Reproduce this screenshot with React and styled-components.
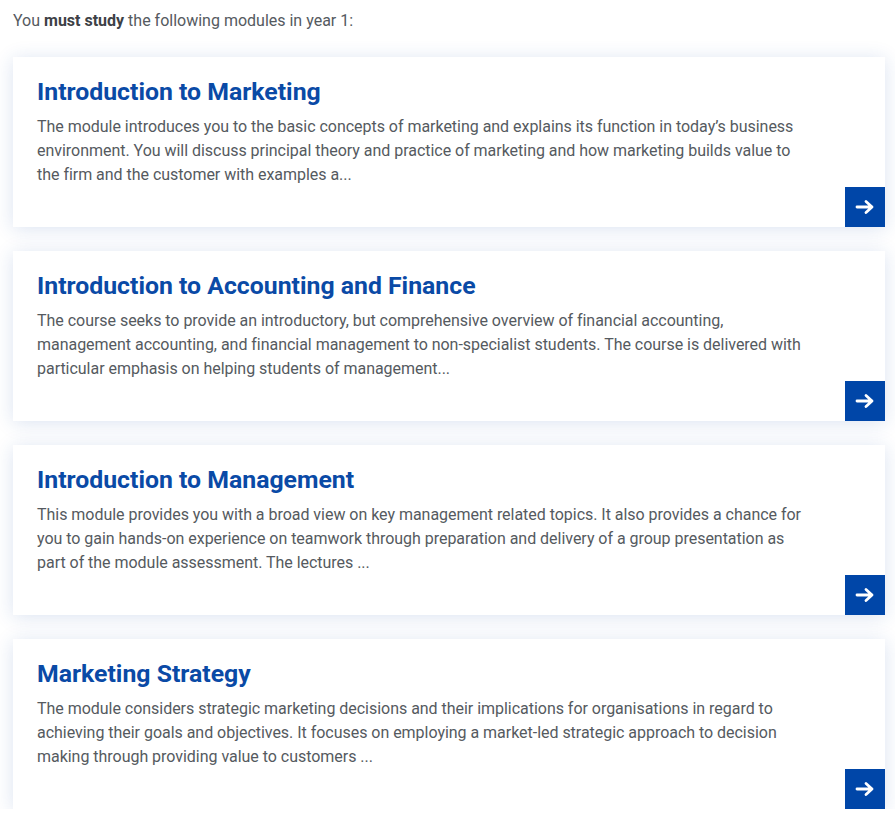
import styled, { createGlobalStyle } from "styled-components"

const GlobalStyle = createGlobalStyle`
  body {
    margin: 0;
    background: #ffffff;
    font-family: Roboto, "Liberation Sans", sans-serif;
  }
`

const modules = [
  {
    title: "Introduction to Marketing",
    text: "The module introduces you to the basic concepts of marketing and explains its function in today’s business environment. You will discuss principal theory and practice of marketing and how marketing builds value to the firm and the customer with examples a...",
  },
  {
    title: "Introduction to Accounting and Finance",
    text: "The course seeks to provide an introductory, but comprehensive overview of financial accounting, management accounting, and financial management to non-specialist students. The course is delivered with particular emphasis on helping students of management...",
  },
  {
    title: "Introduction to Management",
    text: "This module provides you with a broad view on key management related topics. It also provides a chance for you to gain hands-on experience on teamwork through preparation and delivery of a group presentation as part of the module assessment. The lectures ...",
  },
  {
    title: "Marketing Strategy",
    text: "The module considers strategic marketing decisions and their implications for organisations in regard to achieving their goals and objectives. It focuses on employing a market-led strategic approach to decision making through providing value to customers ...",
  },
]

const ArrowIcon = () => (
  <svg width="20" height="16" viewBox="0 0 20 16" fill="none">
    <path d="M2 8h15M11 2.5L17 8l-6 5.5" stroke="#fff" strokeWidth="2.8" strokeLinecap="round" strokeLinejoin="round" />
  </svg>
)

export default function App() {
  return (
    <>
      <GlobalStyle />
      <Page>
        <Intro>
          You <strong>must study</strong> the following modules in year 1:
        </Intro>
        <List>
          {modules.map((m) => (
            <Card key={m.title}>
              <Title>{m.title}</Title>
              <Text>{m.text}</Text>
              <MoreButton aria-label={`More about ${m.title}`}>
                <ArrowIcon />
              </MoreButton>
            </Card>
          ))}
        </List>
      </Page>
    </>
  )
}

const Page = styled.div`
  padding: 10px 10px 0 13px;
`

const Intro = styled.p`
  margin: 0 0 25px;
  font-size: 16px;
  line-height: 22px;
  color: #555a60;

  strong {
    color: #3d4146;
    font-weight: 700;
  }
`

const List = styled.div`
  display: flex;
  flex-direction: column;
  gap: 24px;
`

const Card = styled.div`
  position: relative;
  box-sizing: border-box;
  height: 170px;
  padding: 19px 80px 0 24px;
  background: #ffffff;
  box-shadow: 0 2px 18px rgba(30, 80, 170, 0.16);
`

const Title = styled.h2`
  margin: 0 0 7px;
  font-size: 24.8px;
  line-height: 32px;
  font-weight: 700;
  color: #0a4aa6;
`

const Text = styled.p`
  margin: 0;
  font-size: 16px;
  line-height: 24px;
  letter-spacing: -0.03px;
  color: #555a60;
`

const MoreButton = styled.button`
  position: absolute;
  right: 0;
  bottom: 0;
  width: 40px;
  height: 40px;
  display: flex;
  align-items: center;
  justify-content: center;
  padding: 0;
  border: none;
  background: #0046a8;
  cursor: pointer;
`
